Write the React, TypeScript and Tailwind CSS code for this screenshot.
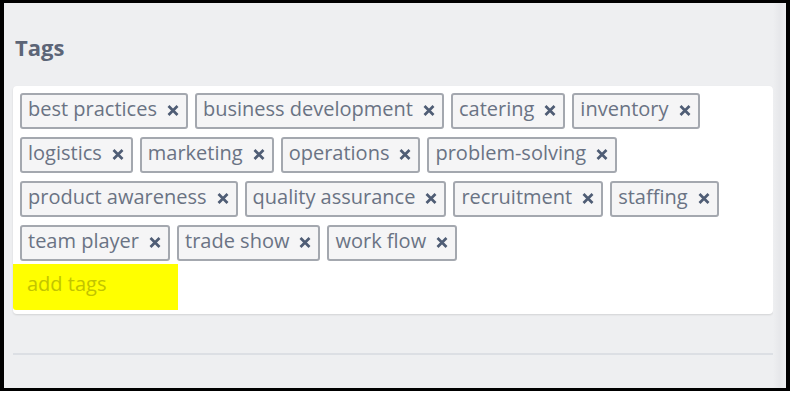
const TAGS = [
  "best practices",
  "business development",
  "catering",
  "inventory",
  "logistics",
  "marketing",
  "operations",
  "problem-solving",
  "product awareness",
  "quality assurance",
  "recruitment",
  "staffing",
  "team player",
  "trade show",
  "work flow",
];

function RemoveIcon() {
  return (
    <svg width="12" height="11" viewBox="0 0 12 11" className="shrink-0">
      <path
        d="M1.5 1 L10.5 10 M10.5 1 L1.5 10"
        stroke="#4f5d75"
        strokeWidth="2.7"
        fill="none"
      />
    </svg>
  );
}

function Tag({ label }: { label: string }) {
  return (
    <div className="flex h-[36px] items-center rounded-[3px] border-2 border-[#a4a8af] bg-[#f5f5f6] pl-[6px] pr-[7px]">
      <span className="pb-[4px] text-[20px] leading-[28px] text-[#6a7384]">{label}</span>
      <span className="ml-[10px] pb-[1px]">
        <RemoveIcon />
      </span>
    </div>
  );
}

export default function App() {
  return (
    <div
      className="h-[394px] w-[791px] bg-white"
      style={{ fontFamily: '"Open Sans", "Liberation Sans", sans-serif' }}
    >
      <div className="flex h-[391px] w-[790px] border-b-[3px] border-l-[4px] border-r-[4px] border-t-[3px] border-black bg-[#eeeff1]">
        <div className="flex flex-1 flex-col pl-[9px] pt-[29px]">
          <h2 className="ml-[2px] text-[22px] font-bold leading-[30px] text-[#5c6577]">Tags</h2>

          <div className="mt-[24px] rounded-[4px] bg-white pb-[4px] pt-[7px] shadow-[0_1px_2px_rgba(0,0,0,0.12)]">
            <div className="flex flex-wrap gap-x-[7px] gap-y-[8px] px-[7px]">
              {TAGS.map((t) => (
                <Tag key={t} label={t} />
              ))}
            </div>
            <div className="mt-[3px] h-[46px] w-[165px] rounded-bl-[3px] bg-[#ffff00] pl-[14px] pt-[6px] text-[20px] leading-[28px] text-[#c2c400]">
              add tags
            </div>
          </div>

          <div className="mt-[39px] h-[2px] bg-[#dcdfe4]" />
        </div>
        <div className="w-[13px] bg-gradient-to-r from-[#eeeff1] via-[#e7e8eb] to-[#eeeff1]" />
      </div>
    </div>
  );
}
